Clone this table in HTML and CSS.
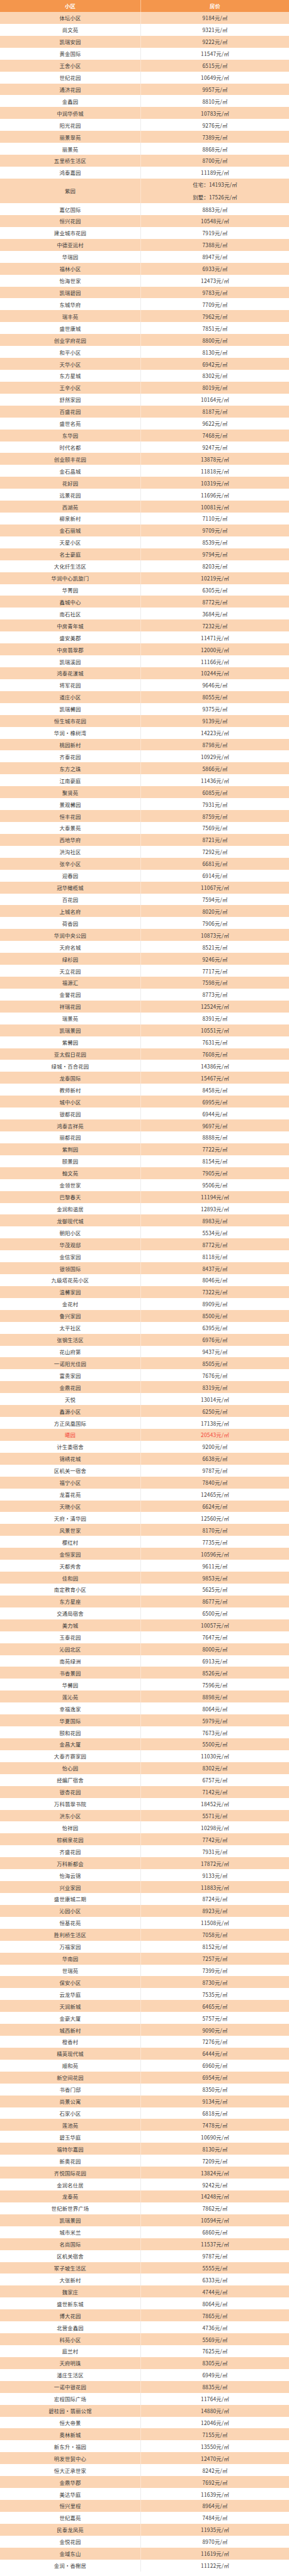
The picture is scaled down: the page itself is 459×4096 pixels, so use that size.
FILE: index.html
```html
<!DOCTYPE html>
<html lang="zh-CN">
<head>
<meta charset="utf-8">
<title>小区房价</title>
<link rel="stylesheet" href="styles.css">
</head>
<body>
<div class="sheet">
<div class="row head"><div class="c name">小区</div><div class="c price">房价</div></div>
<div class="body">
<div class="row"><div class="c name">体坛小区</div><div class="c price">9184元/㎡</div></div>
<div class="row"><div class="c name">尚文苑</div><div class="c price">9321元/㎡</div></div>
<div class="row"><div class="c name">凯瑞安园</div><div class="c price">9222元/㎡</div></div>
<div class="row"><div class="c name">黄金国际</div><div class="c price">11547元/㎡</div></div>
<div class="row"><div class="c name">王舍小区</div><div class="c price">6515元/㎡</div></div>
<div class="row"><div class="c name">世纪花园</div><div class="c price">10649元/㎡</div></div>
<div class="row"><div class="c name">通济花园</div><div class="c price">9957元/㎡</div></div>
<div class="row"><div class="c name">金鑫园</div><div class="c price">8810元/㎡</div></div>
<div class="row"><div class="c name">中润华侨城</div><div class="c price">10783元/㎡</div></div>
<div class="row"><div class="c name">阳光花园</div><div class="c price">9276元/㎡</div></div>
<div class="row"><div class="c name">丽景翠苑</div><div class="c price">7389元/㎡</div></div>
<div class="row"><div class="c name">丽景苑</div><div class="c price">8868元/㎡</div></div>
<div class="row"><div class="c name">五里桥生活区</div><div class="c price">8700元/㎡</div></div>
<div class="row"><div class="c name">鸿泰嘉园</div><div class="c price">11189元/㎡</div></div>
<div class="row tall"><div class="c name">紫园</div><div class="c price multi"><span>住宅：14193元/㎡</span><span>别墅：17526元/㎡</span></div></div>
<div class="row"><div class="c name">嘉亿国际</div><div class="c price">8883元/㎡</div></div>
<div class="row"><div class="c name">恒兴花园</div><div class="c price">10548元/㎡</div></div>
<div class="row"><div class="c name">建业城市花园</div><div class="c price">7919元/㎡</div></div>
<div class="row"><div class="c name">中德亚运村</div><div class="c price">7388元/㎡</div></div>
<div class="row"><div class="c name">华瑞园</div><div class="c price">8947元/㎡</div></div>
<div class="row"><div class="c name">福林小区</div><div class="c price">6933元/㎡</div></div>
<div class="row"><div class="c name">怡海世家</div><div class="c price">12473元/㎡</div></div>
<div class="row"><div class="c name">凯瑞碧园</div><div class="c price">9783元/㎡</div></div>
<div class="row"><div class="c name">东城华府</div><div class="c price">7709元/㎡</div></div>
<div class="row"><div class="c name">瑞丰苑</div><div class="c price">7962元/㎡</div></div>
<div class="row"><div class="c name">盛世康城</div><div class="c price">7851元/㎡</div></div>
<div class="row"><div class="c name">创业学府花园</div><div class="c price">8800元/㎡</div></div>
<div class="row"><div class="c name">和平小区</div><div class="c price">8130元/㎡</div></div>
<div class="row"><div class="c name">天华小区</div><div class="c price">6942元/㎡</div></div>
<div class="row"><div class="c name">东方星城</div><div class="c price">8302元/㎡</div></div>
<div class="row"><div class="c name">王辛小区</div><div class="c price">8019元/㎡</div></div>
<div class="row"><div class="c name">舒然家园</div><div class="c price">10164元/㎡</div></div>
<div class="row"><div class="c name">百盛花园</div><div class="c price">8187元/㎡</div></div>
<div class="row"><div class="c name">盛世名苑</div><div class="c price">9622元/㎡</div></div>
<div class="row"><div class="c name">东华园</div><div class="c price">7468元/㎡</div></div>
<div class="row"><div class="c name">时代名都</div><div class="c price">9247元/㎡</div></div>
<div class="row"><div class="c name">创业颐丰花园</div><div class="c price">13878元/㎡</div></div>
<div class="row"><div class="c name">金石晶城</div><div class="c price">11818元/㎡</div></div>
<div class="row"><div class="c name">花好园</div><div class="c price">10319元/㎡</div></div>
<div class="row"><div class="c name">远景花园</div><div class="c price">11696元/㎡</div></div>
<div class="row"><div class="c name">西湖苑</div><div class="c price">10081元/㎡</div></div>
<div class="row"><div class="c name">柳泉新村</div><div class="c price">7110元/㎡</div></div>
<div class="row"><div class="c name">金石丽城</div><div class="c price">9709元/㎡</div></div>
<div class="row"><div class="c name">天星小区</div><div class="c price">8539元/㎡</div></div>
<div class="row"><div class="c name">名士豪庭</div><div class="c price">9794元/㎡</div></div>
<div class="row"><div class="c name">大化纤生活区</div><div class="c price">8203元/㎡</div></div>
<div class="row"><div class="c name">华润中心凯旋门</div><div class="c price">10219元/㎡</div></div>
<div class="row"><div class="c name">华菁园</div><div class="c price">6305元/㎡</div></div>
<div class="row"><div class="c name">鑫城中心</div><div class="c price">8772元/㎡</div></div>
<div class="row"><div class="c name">南石社区</div><div class="c price">3684元/㎡</div></div>
<div class="row"><div class="c name">中房青年城</div><div class="c price">7232元/㎡</div></div>
<div class="row"><div class="c name">盛安美郡</div><div class="c price">11471元/㎡</div></div>
<div class="row"><div class="c name">中房翡翠郡</div><div class="c price">12000元/㎡</div></div>
<div class="row"><div class="c name">凯瑞溪园</div><div class="c price">11166元/㎡</div></div>
<div class="row"><div class="c name">鸿泰花漾城</div><div class="c price">10244元/㎡</div></div>
<div class="row"><div class="c name">将军花园</div><div class="c price">9646元/㎡</div></div>
<div class="row"><div class="c name">道庄小区</div><div class="c price">8055元/㎡</div></div>
<div class="row"><div class="c name">凯瑞馨园</div><div class="c price">9375元/㎡</div></div>
<div class="row"><div class="c name">恒生城市花园</div><div class="c price">9139元/㎡</div></div>
<div class="row"><div class="c name">华润・橡树湾</div><div class="c price">14223元/㎡</div></div>
<div class="row"><div class="c name">桃园新村</div><div class="c price">8798元/㎡</div></div>
<div class="row"><div class="c name">齐泰花园</div><div class="c price">10929元/㎡</div></div>
<div class="row"><div class="c name">东方之珠</div><div class="c price">5866元/㎡</div></div>
<div class="row"><div class="c name">江南豪庭</div><div class="c price">11436元/㎡</div></div>
<div class="row"><div class="c name">聚贤苑</div><div class="c price">6085元/㎡</div></div>
<div class="row"><div class="c name">景观馨园</div><div class="c price">7931元/㎡</div></div>
<div class="row"><div class="c name">恒丰花园</div><div class="c price">8759元/㎡</div></div>
<div class="row"><div class="c name">大泰景苑</div><div class="c price">7569元/㎡</div></div>
<div class="row"><div class="c name">西地华府</div><div class="c price">8721元/㎡</div></div>
<div class="row"><div class="c name">洪沟社区</div><div class="c price">7292元/㎡</div></div>
<div class="row"><div class="c name">张辛小区</div><div class="c price">6681元/㎡</div></div>
<div class="row"><div class="c name">迎春园</div><div class="c price">6914元/㎡</div></div>
<div class="row"><div class="c name">冠华橄榄城</div><div class="c price">11067元/㎡</div></div>
<div class="row"><div class="c name">百花园</div><div class="c price">7594元/㎡</div></div>
<div class="row"><div class="c name">上城名府</div><div class="c price">8020元/㎡</div></div>
<div class="row"><div class="c name">荷香园</div><div class="c price">7906元/㎡</div></div>
<div class="row"><div class="c name">华润中央公园</div><div class="c price">10873元/㎡</div></div>
<div class="row"><div class="c name">天府名城</div><div class="c price">8521元/㎡</div></div>
<div class="row"><div class="c name">绿杉园</div><div class="c price">9246元/㎡</div></div>
<div class="row"><div class="c name">天立花园</div><div class="c price">7717元/㎡</div></div>
<div class="row"><div class="c name">福源汇</div><div class="c price">7598元/㎡</div></div>
<div class="row"><div class="c name">金誉花园</div><div class="c price">8773元/㎡</div></div>
<div class="row"><div class="c name">祥瑞花园</div><div class="c price">12524元/㎡</div></div>
<div class="row"><div class="c name">瑞景苑</div><div class="c price">8391元/㎡</div></div>
<div class="row"><div class="c name">凯瑞景园</div><div class="c price">10551元/㎡</div></div>
<div class="row"><div class="c name">紫馨园</div><div class="c price">7631元/㎡</div></div>
<div class="row"><div class="c name">亚太假日花园</div><div class="c price">7608元/㎡</div></div>
<div class="row"><div class="c name">绿城・百合花园</div><div class="c price">14386元/㎡</div></div>
<div class="row"><div class="c name">龙泰国际</div><div class="c price">15467元/㎡</div></div>
<div class="row"><div class="c name">教师新村</div><div class="c price">8458元/㎡</div></div>
<div class="row"><div class="c name">城中小区</div><div class="c price">6995元/㎡</div></div>
<div class="row"><div class="c name">银都花园</div><div class="c price">6944元/㎡</div></div>
<div class="row"><div class="c name">鸿泰吉祥苑</div><div class="c price">9697元/㎡</div></div>
<div class="row"><div class="c name">丽都花园</div><div class="c price">8888元/㎡</div></div>
<div class="row"><div class="c name">紫荆园</div><div class="c price">7722元/㎡</div></div>
<div class="row"><div class="c name">颐景园</div><div class="c price">8154元/㎡</div></div>
<div class="row"><div class="c name">翰文苑</div><div class="c price">7905元/㎡</div></div>
<div class="row"><div class="c name">金领世家</div><div class="c price">9506元/㎡</div></div>
<div class="row"><div class="c name">巴黎春天</div><div class="c price">11194元/㎡</div></div>
<div class="row"><div class="c name">金润和谐居</div><div class="c price">12893元/㎡</div></div>
<div class="row"><div class="c name">龙御现代城</div><div class="c price">8983元/㎡</div></div>
<div class="row"><div class="c name">朝阳小区</div><div class="c price">5534元/㎡</div></div>
<div class="row"><div class="c name">华茂观邸</div><div class="c price">8772元/㎡</div></div>
<div class="row"><div class="c name">金信家园</div><div class="c price">8118元/㎡</div></div>
<div class="row"><div class="c name">银领国际</div><div class="c price">8437元/㎡</div></div>
<div class="row"><div class="c name">九级塔花苑小区</div><div class="c price">8046元/㎡</div></div>
<div class="row"><div class="c name">温馨家园</div><div class="c price">7322元/㎡</div></div>
<div class="row"><div class="c name">金花村</div><div class="c price">8909元/㎡</div></div>
<div class="row"><div class="c name">鲁兴家园</div><div class="c price">8500元/㎡</div></div>
<div class="row"><div class="c name">太平社区</div><div class="c price">6395元/㎡</div></div>
<div class="row"><div class="c name">张钢生活区</div><div class="c price">6976元/㎡</div></div>
<div class="row"><div class="c name">花山府第</div><div class="c price">9437元/㎡</div></div>
<div class="row"><div class="c name">一诺阳光佳园</div><div class="c price">8505元/㎡</div></div>
<div class="row"><div class="c name">富贵家园</div><div class="c price">7676元/㎡</div></div>
<div class="row"><div class="c name">金鼎花园</div><div class="c price">8319元/㎡</div></div>
<div class="row"><div class="c name">天悦</div><div class="c price">13014元/㎡</div></div>
<div class="row"><div class="c name">鑫源小区</div><div class="c price">6250元/㎡</div></div>
<div class="row"><div class="c name">方正凤凰国际</div><div class="c price">17138元/㎡</div></div>
<div class="row hot"><div class="c name">曦园</div><div class="c price">20543元/㎡</div></div>
<div class="row"><div class="c name">计生委宿舍</div><div class="c price">9200元/㎡</div></div>
<div class="row"><div class="c name">锦绣花城</div><div class="c price">6638元/㎡</div></div>
<div class="row"><div class="c name">区机关一宿舍</div><div class="c price">9787元/㎡</div></div>
<div class="row"><div class="c name">福宁小区</div><div class="c price">7840元/㎡</div></div>
<div class="row"><div class="c name">龙喜花苑</div><div class="c price">12465元/㎡</div></div>
<div class="row"><div class="c name">天晓小区</div><div class="c price">6624元/㎡</div></div>
<div class="row"><div class="c name">天府・清华园</div><div class="c price">12560元/㎡</div></div>
<div class="row"><div class="c name">风景世家</div><div class="c price">8170元/㎡</div></div>
<div class="row"><div class="c name">樱红村</div><div class="c price">7735元/㎡</div></div>
<div class="row"><div class="c name">金恒家园</div><div class="c price">10596元/㎡</div></div>
<div class="row"><div class="c name">天都秀舍</div><div class="c price">9611元/㎡</div></div>
<div class="row"><div class="c name">佳和园</div><div class="c price">9853元/㎡</div></div>
<div class="row"><div class="c name">南定教育小区</div><div class="c price">5625元/㎡</div></div>
<div class="row"><div class="c name">东方星座</div><div class="c price">8677元/㎡</div></div>
<div class="row"><div class="c name">交通局宿舍</div><div class="c price">6500元/㎡</div></div>
<div class="row"><div class="c name">美力城</div><div class="c price">10057元/㎡</div></div>
<div class="row"><div class="c name">玉泰花园</div><div class="c price">7647元/㎡</div></div>
<div class="row"><div class="c name">沁园北区</div><div class="c price">8000元/㎡</div></div>
<div class="row"><div class="c name">南苑绿洲</div><div class="c price">6913元/㎡</div></div>
<div class="row"><div class="c name">书香景园</div><div class="c price">8526元/㎡</div></div>
<div class="row"><div class="c name">华馨园</div><div class="c price">7596元/㎡</div></div>
<div class="row"><div class="c name">莲沁苑</div><div class="c price">8898元/㎡</div></div>
<div class="row"><div class="c name">幸福逸家</div><div class="c price">8064元/㎡</div></div>
<div class="row"><div class="c name">华夏国际</div><div class="c price">5979元/㎡</div></div>
<div class="row"><div class="c name">颐和花园</div><div class="c price">7673元/㎡</div></div>
<div class="row"><div class="c name">金昌大厦</div><div class="c price">5500元/㎡</div></div>
<div class="row"><div class="c name">大泰齐赛家园</div><div class="c price">11030元/㎡</div></div>
<div class="row"><div class="c name">怡心园</div><div class="c price">8302元/㎡</div></div>
<div class="row"><div class="c name">经编厂宿舍</div><div class="c price">6757元/㎡</div></div>
<div class="row"><div class="c name">银杏花园</div><div class="c price">7142元/㎡</div></div>
<div class="row"><div class="c name">万科翡翠书院</div><div class="c price">18452元/㎡</div></div>
<div class="row"><div class="c name">洪东小区</div><div class="c price">5571元/㎡</div></div>
<div class="row"><div class="c name">怡祥园</div><div class="c price">10298元/㎡</div></div>
<div class="row"><div class="c name">棕榈泉花园</div><div class="c price">7742元/㎡</div></div>
<div class="row"><div class="c name">齐盛花园</div><div class="c price">7931元/㎡</div></div>
<div class="row"><div class="c name">万科新都会</div><div class="c price">17872元/㎡</div></div>
<div class="row"><div class="c name">怡海云锦</div><div class="c price">9133元/㎡</div></div>
<div class="row"><div class="c name">兴业家园</div><div class="c price">11883元/㎡</div></div>
<div class="row"><div class="c name">盛世康城二期</div><div class="c price">8724元/㎡</div></div>
<div class="row"><div class="c name">沁园小区</div><div class="c price">8923元/㎡</div></div>
<div class="row"><div class="c name">恒基花苑</div><div class="c price">11508元/㎡</div></div>
<div class="row"><div class="c name">胜利桥生活区</div><div class="c price">7058元/㎡</div></div>
<div class="row"><div class="c name">万福家园</div><div class="c price">8152元/㎡</div></div>
<div class="row"><div class="c name">华南园</div><div class="c price">7257元/㎡</div></div>
<div class="row"><div class="c name">世瑞苑</div><div class="c price">7399元/㎡</div></div>
<div class="row"><div class="c name">保安小区</div><div class="c price">8730元/㎡</div></div>
<div class="row"><div class="c name">云龙华庭</div><div class="c price">7535元/㎡</div></div>
<div class="row"><div class="c name">天润新城</div><div class="c price">6465元/㎡</div></div>
<div class="row"><div class="c name">金豪大厦</div><div class="c price">5757元/㎡</div></div>
<div class="row"><div class="c name">城西新村</div><div class="c price">9090元/㎡</div></div>
<div class="row"><div class="c name">橙香村</div><div class="c price">7276元/㎡</div></div>
<div class="row"><div class="c name">精英现代城</div><div class="c price">6444元/㎡</div></div>
<div class="row"><div class="c name">顺和苑</div><div class="c price">6960元/㎡</div></div>
<div class="row"><div class="c name">新空间花园</div><div class="c price">6954元/㎡</div></div>
<div class="row"><div class="c name">书香门邸</div><div class="c price">8350元/㎡</div></div>
<div class="row"><div class="c name">尚景公寓</div><div class="c price">9134元/㎡</div></div>
<div class="row"><div class="c name">石家小区</div><div class="c price">6818元/㎡</div></div>
<div class="row"><div class="c name">莲池苑</div><div class="c price">7478元/㎡</div></div>
<div class="row"><div class="c name">碧玉华庭</div><div class="c price">10690元/㎡</div></div>
<div class="row"><div class="c name">福特尔嘉园</div><div class="c price">8130元/㎡</div></div>
<div class="row"><div class="c name">新奥花园</div><div class="c price">7209元/㎡</div></div>
<div class="row"><div class="c name">齐悦国际花园</div><div class="c price">13824元/㎡</div></div>
<div class="row"><div class="c name">金润名仕居</div><div class="c price">9242元/㎡</div></div>
<div class="row"><div class="c name">龙泰苑</div><div class="c price">14248元/㎡</div></div>
<div class="row"><div class="c name">世纪新世界广场</div><div class="c price">7862元/㎡</div></div>
<div class="row"><div class="c name">凯瑞景园</div><div class="c price">10594元/㎡</div></div>
<div class="row"><div class="c name">城市米兰</div><div class="c price">6860元/㎡</div></div>
<div class="row"><div class="c name">名尚国际</div><div class="c price">11537元/㎡</div></div>
<div class="row"><div class="c name">区机关宿舍</div><div class="c price">9787元/㎡</div></div>
<div class="row"><div class="c name">冢子坡生活区</div><div class="c price">5555元/㎡</div></div>
<div class="row"><div class="c name">大张新村</div><div class="c price">6333元/㎡</div></div>
<div class="row"><div class="c name">魏家庄</div><div class="c price">4744元/㎡</div></div>
<div class="row"><div class="c name">盛世新东城</div><div class="c price">8064元/㎡</div></div>
<div class="row"><div class="c name">博大花园</div><div class="c price">7865元/㎡</div></div>
<div class="row"><div class="c name">北营金鑫园</div><div class="c price">4736元/㎡</div></div>
<div class="row"><div class="c name">科苑小区</div><div class="c price">5569元/㎡</div></div>
<div class="row"><div class="c name">庭兰村</div><div class="c price">7625元/㎡</div></div>
<div class="row"><div class="c name">天府明珠</div><div class="c price">8305元/㎡</div></div>
<div class="row"><div class="c name">潘庄生活区</div><div class="c price">6949元/㎡</div></div>
<div class="row"><div class="c name">一诺中银花园</div><div class="c price">8835元/㎡</div></div>
<div class="row"><div class="c name">宏程国际广场</div><div class="c price">11764元/㎡</div></div>
<div class="row"><div class="c name">碧桂园・翡丽公馆</div><div class="c price">14880元/㎡</div></div>
<div class="row"><div class="c name">恒大帝景</div><div class="c price">12046元/㎡</div></div>
<div class="row"><div class="c name">奥林新城</div><div class="c price">7155元/㎡</div></div>
<div class="row"><div class="c name">新东升・福园</div><div class="c price">13550元/㎡</div></div>
<div class="row"><div class="c name">明发世贸中心</div><div class="c price">12470元/㎡</div></div>
<div class="row"><div class="c name">恒大正承世家</div><div class="c price">8242元/㎡</div></div>
<div class="row"><div class="c name">金鼎华郡</div><div class="c price">7692元/㎡</div></div>
<div class="row"><div class="c name">美达华庭</div><div class="c price">11639元/㎡</div></div>
<div class="row"><div class="c name">恒兴里程</div><div class="c price">8964元/㎡</div></div>
<div class="row"><div class="c name">世纪嘉苑</div><div class="c price">7484元/㎡</div></div>
<div class="row"><div class="c name">民泰龙凤苑</div><div class="c price">11935元/㎡</div></div>
<div class="row"><div class="c name">金悦花园</div><div class="c price">8970元/㎡</div></div>
<div class="row"><div class="c name">金域东山</div><div class="c price">11619元/㎡</div></div>
<div class="row"><div class="c name">金润・香榭居</div><div class="c price">11122元/㎡</div></div>
</div>
</div>
</body>
</html>
```

FILE: styles.css
```css
html, body {
  margin: 0;
  padding: 0;
  background: #ffffff;
}

body {
  font-family: "Noto Sans CJK SC", "Noto Sans", sans-serif;
}

.sheet {
  width: 459px;
}

.row {
  display: flex;
  height: 18.93px;
}

.c {
  display: flex;
  align-items: center;
  justify-content: center;
  font-size: 8.3px;
  letter-spacing: 0.25px;
  color: #3a3a3a;
  white-space: nowrap;
}

.name {
  width: 224px;
  box-sizing: border-box;
  border-right: 1px solid #ececec;
}

.price {
  flex: 1;
}

.head {
  height: 18.97px;
  background: #f4964c;
}

.head .c {
  color: #ffffff;
  font-weight: bold;
}

.head .name {
  border-right-color: rgba(255, 255, 255, 0.45);
}

.body .row:nth-child(odd) {
  background: #fbd5b4;
}

.body .row:nth-child(odd) .name {
  border-right-color: rgba(255, 255, 255, 0.35);
}

.row.tall {
  height: 39.2px;
}

.price.multi {
  flex-direction: column;
}

.multi span {
  line-height: 20.5px;
}

.row.hot .c {
  color: #f4463b;
}
```
